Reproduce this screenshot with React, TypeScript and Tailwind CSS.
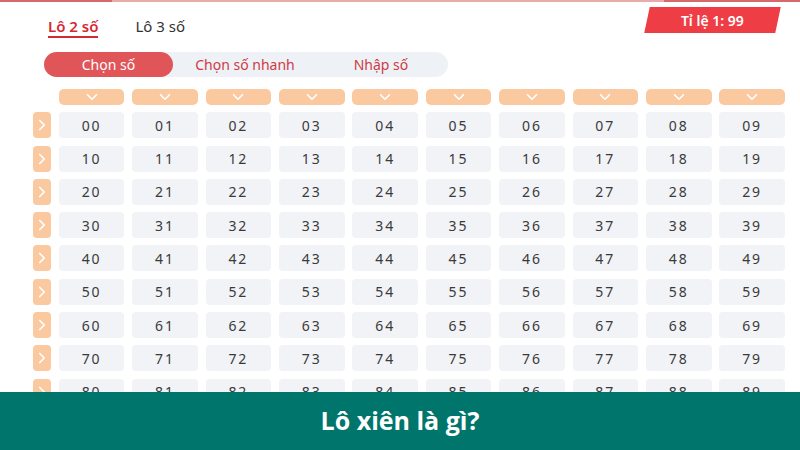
import { ChevronDown, ChevronRight } from "lucide-react";

const rows = Array.from({ length: 9 }, (_, r) =>
  Array.from({ length: 10 }, (_, c) => `${r}${c}`)
);

export default function App() {
  return (
    <main
      className="relative w-[800px] h-[450px] overflow-hidden bg-white text-[#333]"
      style={{ fontFamily: '"Noto Sans", "Open Sans", sans-serif' }}
    >
      {/* top line */}
      <div className="flex h-[2px]">
        <div className="w-[112px] bg-[#d46a6a]" />
        <div className="flex-1 bg-[#e9aaaa]" />
        <div className="w-[136px] bg-[#d46a6a]" />
      </div>

      {/* Header row: tabs + ratio */}
      <div className="flex items-start justify-between pl-[48px] pr-[22px] pt-[5px] h-[50px]">
        <div className="flex gap-[37px] pt-[10px]">
          <span className="text-[15px] font-semibold text-[#d42a33] border-b-2 border-[#d42a33] leading-[18px] pb-[1px]">
            Lô 2 số
          </span>
          <span className="text-[15px] text-[#333] leading-[18px]">Lô 3 số</span>
        </div>
        <div className="-skew-x-12 bg-[#ee3d45] w-[131px] h-[26px] flex items-center justify-center">
          <span className="skew-x-12 text-white text-[14px] font-semibold">
            Tỉ lệ 1: 99
          </span>
        </div>
      </div>

      {/* Segmented control */}
      <div className="pl-[44px]">
        <div className="flex items-center w-[404px] h-[25px] rounded-full bg-[#eef1f6] text-[14px]">
          <div className="w-[129px] h-full rounded-full bg-[#e05558] text-white flex items-center justify-center">
            Chọn số
          </div>
          <div className="w-[144px] text-center text-[#cf3a44]">Chọn số nhanh</div>
          <div className="w-[128px] text-center text-[#cf3a44]">Nhập số</div>
        </div>
      </div>

      {/* Number grid */}
      <div className="pl-[33px] pt-[12px]">
        <div className="grid grid-cols-[18px_repeat(10,65.6px)] gap-x-[7.8px] gap-y-[7.3px]">
          <div />
          {Array.from({ length: 10 }, (_, i) => (
            <div
              key={i}
              className="h-[16px] rounded-[5px] bg-[#fac9a0] flex items-center justify-center"
            >
              <ChevronDown className="w-[18px] h-[18px] text-white" strokeWidth={2.2} />
            </div>
          ))}
          {rows.map((row, r) => (
            <>
              <div
                key={`b${r}`}
                className="h-[26px] rounded-[4px] bg-[#fac9a0] flex items-center justify-center"
              >
                <ChevronRight className="w-[18px] h-[18px] text-white" strokeWidth={2.2} />
              </div>
              {row.map((n) => (
                <div
                  key={n}
                  className="h-[26px] rounded-[4px] bg-[#f1f3f7] flex items-center justify-center text-[14px] tracking-[0.14em] text-[#3a3a3a]"
                >
                  {n}
                </div>
              ))}
            </>
          ))}
        </div>
      </div>

      {/* Banner */}
      <div className="absolute left-0 right-0 bottom-0 h-[58px] bg-[#00756b] flex items-center justify-center">
        <span
          className="text-white text-[25px] font-bold"
          style={{ fontFamily: '"Open Sans", "Noto Sans", sans-serif' }}
        >
          Lô xiên là gì?
        </span>
      </div>
    </main>
  );
}
